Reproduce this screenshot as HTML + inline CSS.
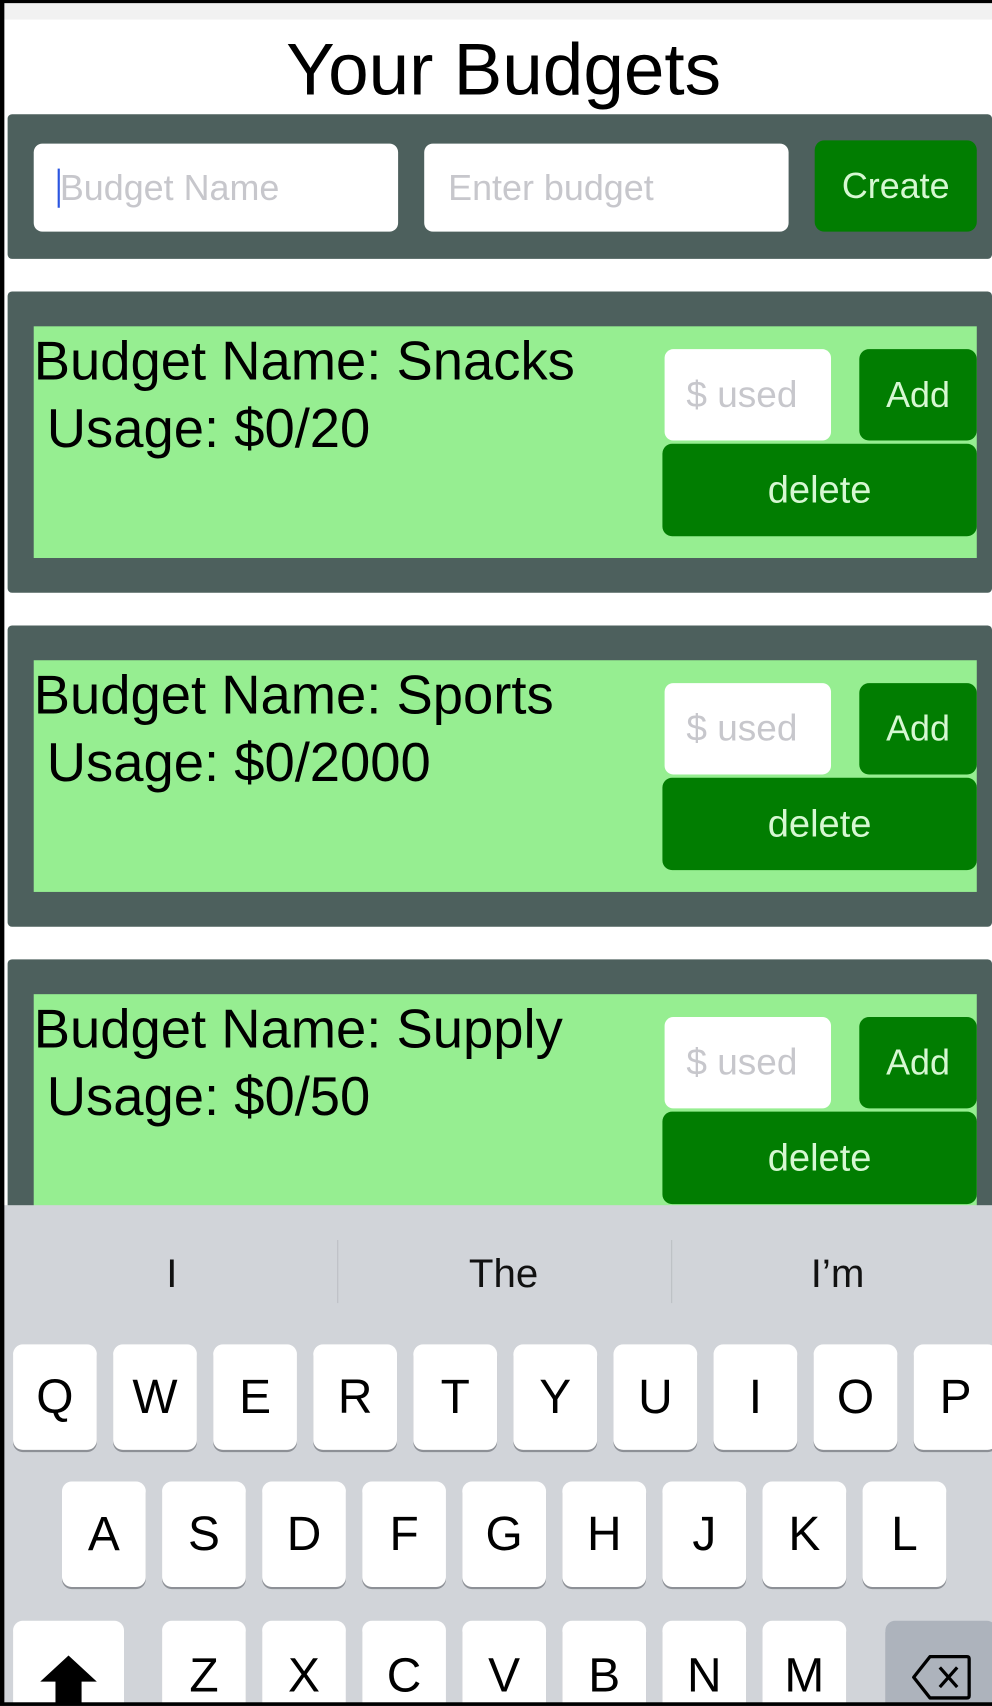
<!DOCTYPE html>
<html><head><meta charset="utf-8">
<style>
*{margin:0;padding:0;box-sizing:border-box}
html,body{width:992px;height:1706px;overflow:hidden;background:#000}
#w{position:absolute;left:0;top:0;width:912px;height:1568px;transform:scale(1.08772);transform-origin:0 0;background:#fff;font-family:"Liberation Sans",sans-serif;overflow:hidden}
.a{position:absolute}
.panel{background:#4d605d}
.inp{background:#fff;border-radius:8px;color:#c7c7cc;font-size:33px;display:flex;align-items:center;padding-left:22px}
.btn{background:#017d01;border-radius:9px;color:#d6f8d2;font-size:33px;display:flex;align-items:center;justify-content:center}
.green{background:#96ee91}
.t{font-size:50px;color:#000;white-space:nowrap;line-height:57px}
.key{position:absolute;background:#fff;border-radius:9px;box-shadow:0 2px 0 #8d9096;font-size:44px;display:flex;align-items:center;justify-content:center;color:#000;width:77px;height:97px}
.sug{position:absolute;top:1150px;font-size:37px;color:#111;transform:translateX(-50%)}
.div{position:absolute;top:1140px;width:1px;height:58px;background:#bcbfc4}
</style></head><body>
<div id="w">
<div class="a" style="left:0;top:0;width:912px;height:3px;background:#000"></div>
<div class="a" style="left:0;top:3px;width:912px;height:15px;background:#f1f1f1"></div>
<div class="a" style="left:0;top:0;width:4px;height:1568px;background:#000;z-index:5"></div>
<div class="a" style="left:0;top:1565px;width:912px;height:3px;background:#000;z-index:5"></div>
<div class="a" style="left:0;top:26px;width:926px;text-align:center;font-size:67px;color:#000">Your Budgets</div>

<div class="a panel" style="left:7px;top:105px;width:905px;height:133px;border-radius:4px"></div>
<div class="a inp" style="left:31px;top:132px;width:335px;height:81px"><span style="display:inline-block;width:2px;height:36px;background:#2a55e0;margin-right:0"></span>Budget Name</div>
<div class="a inp" style="left:390px;top:132px;width:335px;height:81px">Enter budget</div>
<div class="a btn" style="left:749px;top:129px;width:149px;height:84px">Create</div>

<div class="a panel" style="left:7px;top:268px;width:905px;height:277px;border-radius:4px"></div>
<div class="a green" style="left:31px;top:300px;width:867px;height:213px"></div>
<div class="a t" style="left:31px;top:304px">Budget Name: Snacks</div>
<div class="a t" style="left:43px;top:366px">Usage: $0/20</div>
<div class="a inp" style="left:611px;top:321px;width:153px;height:84px;font-size:34px;padding-left:20px">$ used</div>
<div class="a btn" style="left:790px;top:321px;width:108px;height:84px">Add</div>
<div class="a btn" style="left:609px;top:408px;width:289px;height:85px;font-size:35px">delete</div>

<div class="a panel" style="left:7px;top:575px;width:905px;height:277px;border-radius:4px"></div>
<div class="a green" style="left:31px;top:607px;width:867px;height:213px"></div>
<div class="a t" style="left:31px;top:611px">Budget Name: Sports</div>
<div class="a t" style="left:43px;top:673px">Usage: $0/2000</div>
<div class="a inp" style="left:611px;top:628px;width:153px;height:84px;font-size:34px;padding-left:20px">$ used</div>
<div class="a btn" style="left:790px;top:628px;width:108px;height:84px">Add</div>
<div class="a btn" style="left:609px;top:715px;width:289px;height:85px;font-size:35px">delete</div>

<div class="a panel" style="left:7px;top:882px;width:905px;height:277px;border-radius:4px"></div>
<div class="a green" style="left:31px;top:914px;width:867px;height:213px"></div>
<div class="a t" style="left:31px;top:918px">Budget Name: Supply</div>
<div class="a t" style="left:43px;top:980px">Usage: $0/50</div>
<div class="a inp" style="left:611px;top:935px;width:153px;height:84px;font-size:34px;padding-left:20px">$ used</div>
<div class="a btn" style="left:790px;top:935px;width:108px;height:84px">Add</div>
<div class="a btn" style="left:609px;top:1022px;width:289px;height:85px;font-size:35px">delete</div>

<div class="a" style="left:0;top:1108px;width:912px;height:460px;background:#d1d4d9"></div>
<div class="sug" style="left:158px">I</div>
<div class="sug" style="left:463px">The</div>
<div class="sug" style="left:770px">I’m</div>
<div class="div" style="left:310px"></div>
<div class="div" style="left:617px"></div>

<div class="key" style="left:12px;top:1236px">Q</div>
<div class="key" style="left:104px;top:1236px">W</div>
<div class="key" style="left:196px;top:1236px">E</div>
<div class="key" style="left:288px;top:1236px">R</div>
<div class="key" style="left:380px;top:1236px">T</div>
<div class="key" style="left:472px;top:1236px">Y</div>
<div class="key" style="left:564px;top:1236px">U</div>
<div class="key" style="left:656px;top:1236px">I</div>
<div class="key" style="left:748px;top:1236px">O</div>
<div class="key" style="left:840px;top:1236px">P</div>

<div class="key" style="left:57px;top:1362px">A</div>
<div class="key" style="left:149px;top:1362px">S</div>
<div class="key" style="left:241px;top:1362px">D</div>
<div class="key" style="left:333px;top:1362px">F</div>
<div class="key" style="left:425px;top:1362px">G</div>
<div class="key" style="left:517px;top:1362px">H</div>
<div class="key" style="left:609px;top:1362px">J</div>
<div class="key" style="left:701px;top:1362px">K</div>
<div class="key" style="left:793px;top:1362px">L</div>

<div class="key" style="left:12px;top:1490px;width:102px;align-items:flex-start;padding-top:30px"><svg width="56" height="48" viewBox="0 0 56 48"><path d="M28 2 L54 26 L40 26 L40 46 L16 46 L16 26 L2 26 Z" fill="#000"/></svg></div>
<div class="key" style="left:149px;top:1490px;align-items:flex-start;padding-top:26px">Z</div>
<div class="key" style="left:241px;top:1490px;align-items:flex-start;padding-top:26px">X</div>
<div class="key" style="left:333px;top:1490px;align-items:flex-start;padding-top:26px">C</div>
<div class="key" style="left:425px;top:1490px;align-items:flex-start;padding-top:26px">V</div>
<div class="key" style="left:517px;top:1490px;align-items:flex-start;padding-top:26px">B</div>
<div class="key" style="left:609px;top:1490px;align-items:flex-start;padding-top:26px">N</div>
<div class="key" style="left:701px;top:1490px;align-items:flex-start;padding-top:26px">M</div>
<div class="key" style="left:814px;top:1490px;width:102px;background:#adb3bc;align-items:flex-start;padding-top:30px"><svg width="56" height="44" viewBox="0 0 56 44"><path d="M18 3 H52 Q54 3 54 5 V39 Q54 41 52 41 H18 L3 22 Z" fill="none" stroke="#000" stroke-width="3" stroke-linejoin="round"/><path d="M27 13 L43 31 M43 13 L27 31" stroke="#000" stroke-width="3"/></svg></div>
</div>
</body></html>
